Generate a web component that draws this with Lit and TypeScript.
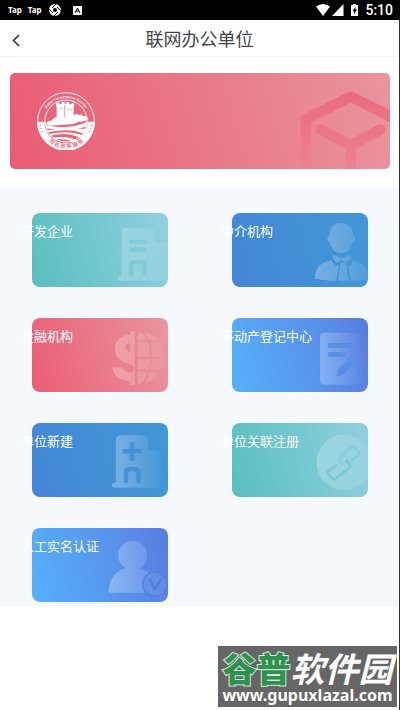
import { LitElement, html, css, svg } from "lit";
import { customElement, property } from "lit/decorators.js";

type Tone = "teal" | "blue" | "red" | "sky";

const fade = (id: string, x1: number, x2: number, from = 0.34, to = 0.04) => svg`
  <defs>
    <linearGradient id=${id} gradientUnits="userSpaceOnUse" x1=${x1} y1="0" x2=${x2} y2="0">
      <stop offset="0" stop-color="#fff" stop-opacity=${from}></stop>
      <stop offset="1" stop-color="#fff" stop-opacity=${to}></stop>
    </linearGradient>
  </defs>`;

const icons: Record<string, unknown> = {
  building: svg`
    ${fade("g", 326, 474, 0.22, 0.06)}
    <path fill="url(#g)" fill-rule="evenodd" d="M336 229V99q0-16 16-16h66q16 0 16 16v30h40v114H332q-8 0-8-7t8-7zM364 119q-6 0-6 6.500t6 6.500h42q6 0 6-6.500t-6-6.500zM364 142q-6 0-6 6.500t6 6.500h42q6 0 6-6.500t-6-6.500zM358 227h13v-26q0-8 8-8h12q8 0 8 8v26h12v-30q0-17-17-17h-19q-17 0-17 17z"></path>`,
  agent: svg`
    ${fade("g", 316, 474, 0.28, 0.08)}
    <g fill="url(#g)">
      <path d="M395 68c25 0 36 17 36 38 8 0 8 16-1 19-5 21-18 35-35 35s-31-14-36-35c-8-3-8-19 0-19 0-21 11-38 36-38z"></path>
      <path d="M372 164l24 12 24-12 6 12-17 13-9-7h-8l-9 7-14-13z"></path>
      <path d="M362 181l-17 6c-22 9-29 27-30 49 21 5 43 7 65 7l7-49-8 4z"></path>
      <path d="M393 188h14l4 9 6 46h-31l5-46z"></path>
      <path d="M431 181l17 6c16 7 23 17 26 27v25c-16 3-33 4-50 4l-9-49 8 4z"></path>
    </g>`,
  finance: svg`
    ${fade("g", 308, 466, 0.28, 0.05)}
    <g fill="url(#g)">
      <path d="M361 79h14v162h-14v-11c-32-2-51-17-54-42h33c2 10 8 15 19 15 10 0 15-5 15-12 0-8-7-11-22-16-24-8-37-20-37-43 0-25 18-41 46-43zM361 114c-9 1-14 5-14 12 0 8 5 12 14 15z" fill-rule="evenodd"></path>
      <path d="M384 80c12 0 23 10 30 26h-30zM384 111h31c5 13 7 28 7 45h-38zM384 161h38c0 13-3 24-6 34h-32zM384 200h31c-8 25-18 40-31 40z"></path>
      <path d="M405 82c21 4 37 12 45 24h-30c-4-9-9-18-15-24zM421 111h32c8 13 10 28 10 45h-35c0-17-2-32-7-45zM428 161h35c-1 13-4 24-10 34h-31c4-10 6-21 6-34zM420 200h29c-10 20-25 31-45 37 7-9 12-22 16-37z"></path>
    </g>`,
  registry: svg`
    ${fade("g", 330, 462, 0.28, 0.01)}
    <rect x="331" y="83" width="131" height="156" rx="11" fill="url(#g)"></rect>
    <g fill="#578fe6">
      <rect x="354" y="114" width="80" height="15" rx="7"></rect>
      <rect x="354" y="141" width="54" height="15" rx="7"></rect>
      <path d="M381 216l5-23 32-33 16 15-32 34zM422 156l5-4q6-2 14 7 5 7 2 11l-5 4z"></path>
    </g>`,
  hospital: svg`
    ${fade("g", 306, 464, 0.3, 0.01)}
    <path fill="url(#g)" fill-rule="evenodd" d="M318 219V91q0-16 16-16h65q16 0 16 16v31h26q14 0 14 14v83h9v15H314q-8 0-8-7.500t8-7.500zM360 96v21h-22v13h22v22h14v-22h21v-13h-21V96zM342 219h13v-26q0-9 8-9h9q8 0 8 9v26h13v-30q0-18-17-18h-17q-17 0-17 18z"></path>`,
  link: svg`
    ${fade("g", 320, 474, 0.24, 0.08)}
    <circle cx="404" cy="157" r="84" fill="url(#g)"></circle>
    <g fill="none" stroke="#74c5cd" stroke-width="8" stroke-linecap="round" stroke-linejoin="round" opacity=".75">
      <path d="M378 167l-20 15q-6 5-2 11l12 13q5 6 12 0l38-32q6-6 1-12l-7-9"></path>
      <path opacity=".55" d="M427 150l20-13q6-5 1-11l-11-13q-5-6-12-1l-33 30q-6 6-1 12l7 9"></path>
    </g>`,
  verified: svg`
    ${fade("g", 296, 474, 0.3, 0.04)}
    <path fill="url(#g)" d="M369 77c27 0 44 19 44 44 0 17-9 31-22 39 12 3 20 8 27 14-20 11-27 38-12 60H304q-8 0-8-8c4-36 22-60 53-66-14-8-24-22-24-39 0-25 18-44 44-44z"></path>
    <circle cx="436" cy="208" r="34" fill="#fff" fill-opacity=".08"></circle>
    <circle cx="436" cy="208" r="37" fill="none" stroke="#5380dc" stroke-width="5" opacity=".6"></circle>
    <path d="M422 195l14 29 17-29" fill="none" stroke="#547bdc" stroke-width="8" stroke-linecap="round" stroke-linejoin="round" opacity=".85"></path>`,
};

const units: { label: string; icon: string; tone: Tone }[] = [
  { label: "开发企业", icon: "building", tone: "teal" },
  { label: "中介机构", icon: "agent", tone: "blue" },
  { label: "金融机构", icon: "finance", tone: "red" },
  { label: "不动产登记中心", icon: "registry", tone: "sky" },
  { label: "单位新建", icon: "hospital", tone: "blue" },
  { label: "单位关联注册", icon: "link", tone: "teal" },
  { label: "人工实名认证", icon: "verified", tone: "sky" },
];

@customElement("unit-card")
class UnitCard extends LitElement {
  @property() label = "";
  @property() icon = "";
  @property() tone: Tone = "teal";

  static styles = css`
    :host {
      display: block;
    }
    .card {
      display: grid;
      height: 74px;
      border-radius: 8px;
      color: #fff;
      text-decoration: none;
    }
    .teal { background: linear-gradient(75deg, #5abfbe, #76c8d1 55%, #93cfe1); }
    .blue { background: linear-gradient(75deg, #4386d6, #4390d6 55%, #4298d8); }
    .red { background: linear-gradient(75deg, #eb5d75, #e97c8b 55%, #e9969f); }
    .sky { background: linear-gradient(75deg, #56b0fa, #5896eb 55%, #597cdf); }
    .label {
      grid-area: 1 / 1;
      z-index: 1;
      margin: 8px 0 0 -11px;
      font-size: 13px;
      line-height: 20px;
      white-space: nowrap;
    }
    .icon {
      grid-area: 1 / 1;
      justify-self: end;
      width: 136px;
      height: 74px;
      border-radius: 8px;
    }
  `;

  render() {
    return html`<a class="card ${this.tone}" href="#">
      <span class="label">${this.label}</span>
      <svg class="icon" viewBox="66 38 408 224" aria-hidden="true">${icons[this.icon]}</svg>
    </a>`;
  }
}

@customElement("app-root")
class AppRoot extends LitElement {
  static styles = css`
    :host {
      display: block;
      min-height: 100vh;
      background: #fff;
      font-family: "Noto Sans CJK SC", sans-serif;
    }
    .status {
      display: flex;
      align-items: center;
      gap: 6px;
      height: 20px;
      padding: 0 7px 0 8px;
      background: #000;
      color: #fff;
    }
    .tap {
      font: 700 8px/18px "Noto Sans", sans-serif;
    }
    .spacer { flex: 1; }
    .time {
      font: 500 14px/20px Roboto, sans-serif;
    }
    .screen {
      box-sizing: border-box;
      min-height: calc(100vh - 20px);
      border-right: 1px solid #333;
    }
    .header {
      display: grid;
      grid-template-columns: 32px 1fr 32px;
      align-items: center;
      height: 36px;
      border-bottom: 1px solid #f2f2f2;
    }
    .back {
      display: flex;
      align-items: center;
      justify-content: center;
      height: 36px;
      padding: 4px 0 0;
      border: 0;
      background: none;
    }
    .title {
      margin: 0;
      color: #444;
      font-size: 18px;
      font-weight: 400;
      line-height: 36px;
      text-align: center;
    }
    .banner {
      display: flex;
      align-items: center;
      justify-content: space-between;
      height: 96px;
      margin: 16px 9px 19px 10px;
      padding-left: 27px;
      border-radius: 5px;
      overflow: hidden;
      background: linear-gradient(75deg, #ea5b74, #e97886 50%, #e9959e);
    }
    .seal { width: 58px; height: 58px; }
    .cube { width: 93px; height: 96px; }
    .en { font: 700 12px "Liberation Serif", serif; }
    .zh { font: 700 16px "Noto Sans CJK SC", sans-serif; }
    .units {
      display: grid;
      grid-template-columns: 1fr 1fr;
      gap: 31px 64px;
      padding: 25px 31px 5px 32px;
      background: #f5f9fc;
    }
    .mark {
      position: absolute;
      right: 3px;
      bottom: 3px;
      box-sizing: border-box;
      display: flex;
      flex-direction: column;
      align-items: center;
      width: 179px;
      height: 61px;
      padding-top: 4px;
      background: #666;
      color: #fff;
      white-space: nowrap;
    }
    .name {
      font-size: 34px;
      font-weight: 900;
      line-height: 36px;
    }
    .white {
      font-style: italic;
      font-weight: 700;
    }
    .green {
      color: #2f9150;
      -webkit-text-stroke: 2px #d5e8d8;
      paint-order: stroke fill;
    }
    .site {
      font: 700 16px/18px "Noto Sans", sans-serif;
    }
  `;

  render() {
    return html`
      <div class="status">
        <span class="tap">Tap</span>
        <span class="tap">Tap</span>
        <svg width="14" height="14" viewBox="0 0 14 14" aria-hidden="true">
          <circle cx="7" cy="7" r="4" fill="none" stroke="#fff" stroke-width="4"></circle>
          <path d="M8 1L4 5M13 8L9 4M6 13l4-4M1 6l4 4" stroke="#000"></path>
        </svg>
        <svg width="18" height="12" viewBox="0 0 18 12" aria-hidden="true">
          <rect x="5" y="2" width="9" height="9" rx="1" fill="#fff"></rect>
          <path d="M7 9l2.500-5L12 9M8 7h3" fill="none" stroke="#000"></path>
        </svg>
        <span class="spacer"></span>
        <svg width="43" height="14" viewBox="0 0 43 14" fill="#fff" aria-hidden="true">
          <path d="M0 3.500Q7-1.500 14 3.500L7 13zM16 13L27.500 1v12zM35 2h2V1h3v1h2v11h-7z"></path>
          <path d="M39.500 4l-3 4H38v3l3-4.500h-1.500z" fill="#000"></path>
        </svg>
        <span class="time">5:10</span>
      </div>
      <main class="screen">
        <header class="header">
          <button class="back" aria-label="返回">
            <svg width="8" height="13" viewBox="0 0 8 13" fill="none" stroke="#333" stroke-width="1.600">
              <path d="M7 1L1.500 6.500 7 12"></path>
            </svg>
          </button>
          <h1 class="title">联网办公单位</h1>
        </header>
        <section class="banner">
          <svg class="seal" viewBox="111 96 174 174" fill="#fff" aria-hidden="true">
            <defs>
              <path id="top" d="M129 183a69 69 0 0 1 138 0"></path>
              <path id="bottom" d="M117 183a81 81 0 0 0 162 0"></path>
            </defs>
            <circle cx="198" cy="183" r="85" fill="none" stroke="#fff" stroke-width="3"></circle>
            <path d="M111 185h22a65 65 0 0 0 130 0h22a87 87 0 0 1-174 0z"></path>
            <circle cx="198" cy="183" r="63" fill="none" stroke="#fff" stroke-width="3"></circle>
            <path d="M137 191l8-8 9-1 5-6 11-6v-30l-2-2v-9l8-2 2 5 7-1v-5l9-1v6h5v-6l9 2v5l6 1 2-4 7 2v8l-2 2v24l10-4 6 5 9-3 2 6 9-1 9 9-14 7-17 1-14 7-73 5z"></path>
            <path d="M194 135v37M180 143v5M187 143v5M205 145v5M213 147v5" stroke="#e96b7e" stroke-width="2"></path>
            <path d="M136 194c37 11 82 11 126-8v12c-42 16-90 15-123 7zM140 211c38-3 93-6 121-4-2 6-5 10-8 15-37-17-76-11-110-5zM146 223c31-8 69-9 103 3l-7 8c-29-14-62-15-90-6zM157 233c26-5 58-2 77 9l-12 5c-16-9-36-11-56-8z"></path>
            <text class="en"><textPath href="#top" startOffset="50%" text-anchor="middle">Hebei Government Service</textPath></text>
            <text class="zh" fill="#e96b7e"><textPath href="#bottom" startOffset="50%" text-anchor="middle">河 北 政 务 服 务</textPath></text>
            <g fill="#e96b7e">
              <circle cx="121" cy="196" r="2"></circle><circle cx="123" cy="205" r="2"></circle><circle cx="127" cy="214" r="2"></circle>
              <circle cx="275" cy="196" r="2"></circle><circle cx="273" cy="205" r="2"></circle><circle cx="269" cy="214" r="2"></circle>
            </g>
          </svg>
          <svg class="cube" viewBox="290 40 280 288" fill="none" stroke-width="32" aria-hidden="true">
            <defs>
              <linearGradient id="cube" gradientUnits="userSpaceOnUse" x1="450" y1="95" x2="450" y2="328">
                <stop offset="0" stop-color="#ea6a80"></stop>
                <stop offset="1" stop-color="#ea8290"></stop>
              </linearGradient>
            </defs>
            <path stroke="url(#cube)" stroke-linejoin="round" d="M317 340V179l136-68 136 68v161"></path>
            <path stroke="url(#cube)" stroke-linecap="round" d="M362 210l90 47 89-47M452 257v100"></path>
          </svg>
        </section>
        <nav class="units" aria-label="联网办公单位">
          ${units.map(
            (u) => html`<unit-card .label=${u.label} .icon=${u.icon} .tone=${u.tone}></unit-card>`
          )}
        </nav>
      </main>
      <div class="mark">
        <span class="name"><span class="green">谷普</span><span class="white">软件园</span></span>
        <span class="site">www.gupuxlazal.com</span>
      </div>
    `;
  }
}
